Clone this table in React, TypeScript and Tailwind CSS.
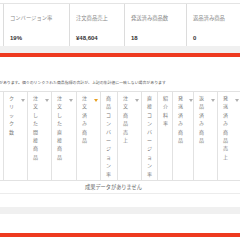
import React from 'react'

const fontStack = "font-['Liberation_Sans','Noto_Sans_CJK_JP',sans-serif]"

type Col = { label: string; w: string; arrow?: 'gray' | 'orange' }

const summary = [
  { label: 'コンバージョン率', value: '19%', w: 'w-[66px]' },
  { label: '注文商品売上', value: '¥48,604', w: 'w-[55px]' },
  { label: '発送済み商品数', value: '18', w: 'w-[62px]' },
  { label: '返品済み商品', value: '0', w: 'flex-1' },
]

const columns: Col[] = [
  { label: 'クリック数', w: 'w-[24px]', arrow: 'gray' },
  { label: '注文した間接商品', w: 'w-[24px]', arrow: 'gray' },
  { label: '注文した直接商品', w: 'w-[25px]', arrow: 'gray' },
  { label: '注文済み商品', w: 'w-[24px]', arrow: 'orange' },
  { label: '商品コンバージョン率', w: 'w-[17px]' },
  { label: '注文商品売上', w: 'w-[24px]', arrow: 'gray' },
  { label: '直接コンバージョン率', w: 'w-[16px]' },
  { label: '紹介料率', w: 'w-[15px]' },
  { label: '発送済み商品', w: 'w-[21px]', arrow: 'gray' },
  { label: '返品済み商品', w: 'w-[24px]', arrow: 'gray' },
  { label: '発送済み商品売上', w: 'w-[30px]', arrow: 'gray' },
]

function SortArrow({ color }: { color: 'gray' | 'orange' }) {
  return (
    <svg width="4" height="3" viewBox="0 0 4 3" className="mt-[5px] shrink-0">
      <path d="M0 0 L4 0 L2 3 Z" fill={color === 'orange' ? '#e8a020' : '#b0b0b0'} />
    </svg>
  )
}

export default function App() {
  return (
    <div className={`w-[240px] h-[240px] overflow-hidden bg-white ${fontStack}`}>
      {/* summary card */}
      <div className="pt-[3px]">
        <div className="flex h-[43px] border-t border-[#e4e4e4]">
          <div className="w-[3px]" />
          {summary.map((s) => (
            <div key={s.label} className={`${s.w} shrink-0 border-l border-[#dcdcdc] pl-[6px] pt-[11px]`}>
              <div className="text-[5.3px] leading-[6px] text-[#8a8a8a]">{s.label}</div>
              <div className="mt-[14px] text-[6px] leading-[7px] font-bold text-[#333]">{s.value}</div>
            </div>
          ))}
        </div>
      </div>
      <div className="h-[7px] bg-[#f0f0f0]" />
      <div className="h-[4px] bg-[#ee3a20]" />

      {/* note */}
      <div className="h-[34px] pt-[23px]">
        <p className="-ml-[1px] whitespace-nowrap text-[3.9px] leading-[5px] text-[#555]">
          があります。個々のリンクされた商品指標の合計が、上記の集計値に一致しない場合があります
        </p>
      </div>

      {/* report table */}
      <div className="flex h-[90px] border-t border-b border-[#e2e2e2]">
        <div className="w-[3px] shrink-0" />
        {columns.map((c) => (
          <div key={c.label} className={`${c.w} shrink-0 flex border-l border-[#e2e2e2] pl-[5px] pt-[2px]`}>
            <div className="w-[6px] text-[5px] leading-[8.4px] text-[#7a7a7a]">
              {c.label.split('').map((ch, i) => (
                <div key={i}>{ch}</div>
              ))}
            </div>
            {c.arrow && (
              <div className="ml-[6px]">
                <SortArrow color={c.arrow} />
              </div>
            )}
          </div>
        ))}
      </div>
      <div className="h-[13px] border-b border-[#ececec] pl-[85px] pt-[3px] text-[5.2px] leading-[6px] text-[#666]">
        成果データがありません
      </div>
      <div className="h-[13px]" />
      <div className="h-[7px] bg-[#f0f0f0]" />
      <div className="h-[19px]" />
      <div className="h-[4px] bg-[#ee3a20]" />
    </div>
  )
}
